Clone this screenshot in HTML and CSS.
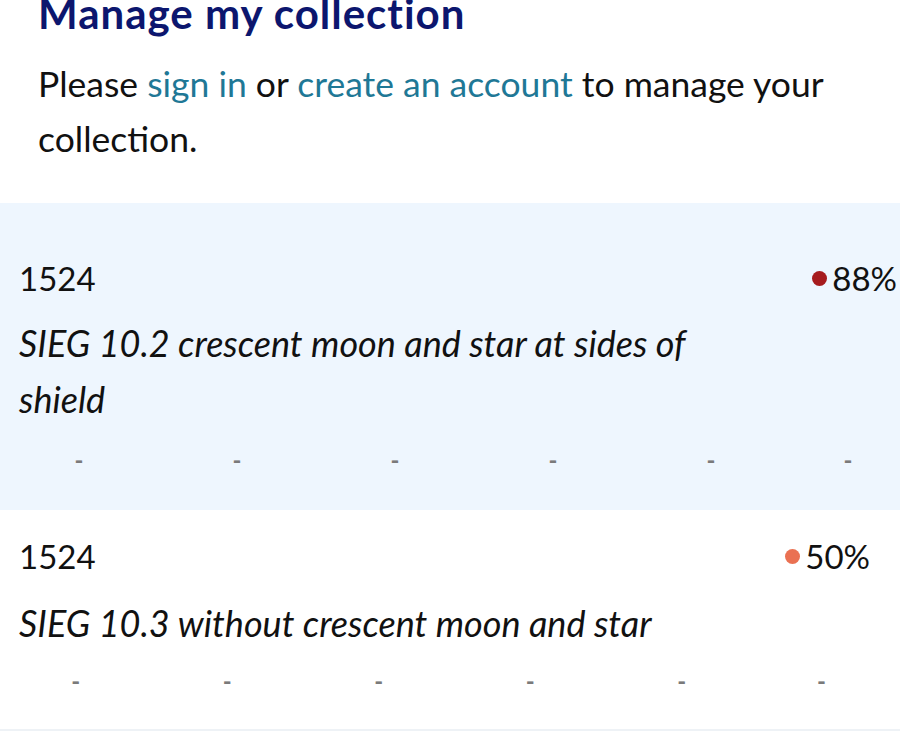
FILE: index.html
```html
<!DOCTYPE html>
<html lang="en">
<head>
<meta charset="utf-8">
<title>Manage my collection</title>
<link rel="stylesheet" href="styles.css">
</head>
<body>
<section class="intro">
  <h1 class="title">Manage my collection</h1>
  <p class="lead">Please <a href="#" class="link">sign in</a> or <a href="#" class="link">create an account</a> to manage your collection.</p>
</section>
<div class="list">
  <div class="item item--active">
    <div class="item__head">
      <span class="item__year">1524</span>
      <span class="rarity"><span class="dot dot--high"></span>88%</span>
    </div>
    <div class="item__desc">SIEG 10.2 crescent moon and star at sides of shield</div>
    <div class="grades grades--a">
      <span>-</span><span>-</span><span>-</span><span>-</span><span>-</span><span>-</span>
    </div>
  </div>
  <div class="item item--plain">
    <div class="item__head">
      <span class="item__year">1524</span>
      <span class="rarity"><span class="dot dot--mid"></span>50%</span>
    </div>
    <div class="item__desc">SIEG 10.3 without crescent moon and star</div>
    <div class="grades grades--b">
      <span>-</span><span>-</span><span>-</span><span>-</span><span>-</span><span>-</span>
    </div>
  </div>
</div>
</body>
</html>
```
FILE: styles.css
```css
html, body {
  margin: 0;
  padding: 0;
  background: #ffffff;
}
body {
  font-family: Lato, "Noto Sans", sans-serif;
  color: #111111;
  width: 900px;
  height: 748px;
  overflow: hidden;
}
.intro {
  padding: 0 38px;
  margin-top: -10px;
}
.title {
  margin: 0;
  font-size: 42px;
  line-height: 46px;
  font-weight: 700;
  letter-spacing: 1px;
  color: #0c166e;
}
.lead {
  margin: 20px 0 0;
  font-size: 35.5px;
  line-height: 55px;
}
.link {
  color: #1f7896;
  text-decoration: none;
}
.list {
  margin-top: 37px;
}
.item {
  padding-left: 19px;
}
.item--active {
  background: #eef6fe;
  padding-top: 53px;
  padding-bottom: 35px;
  padding-right: 3px;
}
.item--plain {
  padding-top: 24px;
  padding-bottom: 33px;
  padding-right: 30px;
  border-bottom: 2px solid #eef2f6;
}
.item__head {
  display: flex;
  justify-content: space-between;
  align-items: center;
  font-size: 33px;
  line-height: 44px;
}
.rarity {
  display: flex;
  align-items: center;
  gap: 5px;
}
.dot {
  width: 15px;
  height: 15px;
  border-radius: 50%;
  display: inline-block;
}
.dot--high { background: #a61b1e; }
.dot--mid { background: #ea7152; }
.item__desc {
  margin-top: 15px;
  font-size: 36px;
  line-height: 56px;
  font-style: italic;
  max-width: 700px;
}
.item--plain .item__desc {
  margin-top: 17px;
}
.grades {
  display: grid;
  margin-left: -19px;
  margin-top: 18px;
  font-size: 24px;
  font-weight: 700;
  line-height: 30px;
  color: #7a7a7a;
  text-align: center;
}
.grades--a {
  grid-template-columns: repeat(5, 158px) 116px;
}
.grades--b {
  margin-top: 15px;
  grid-template-columns: repeat(5, 151.5px) 128px;
}
```
